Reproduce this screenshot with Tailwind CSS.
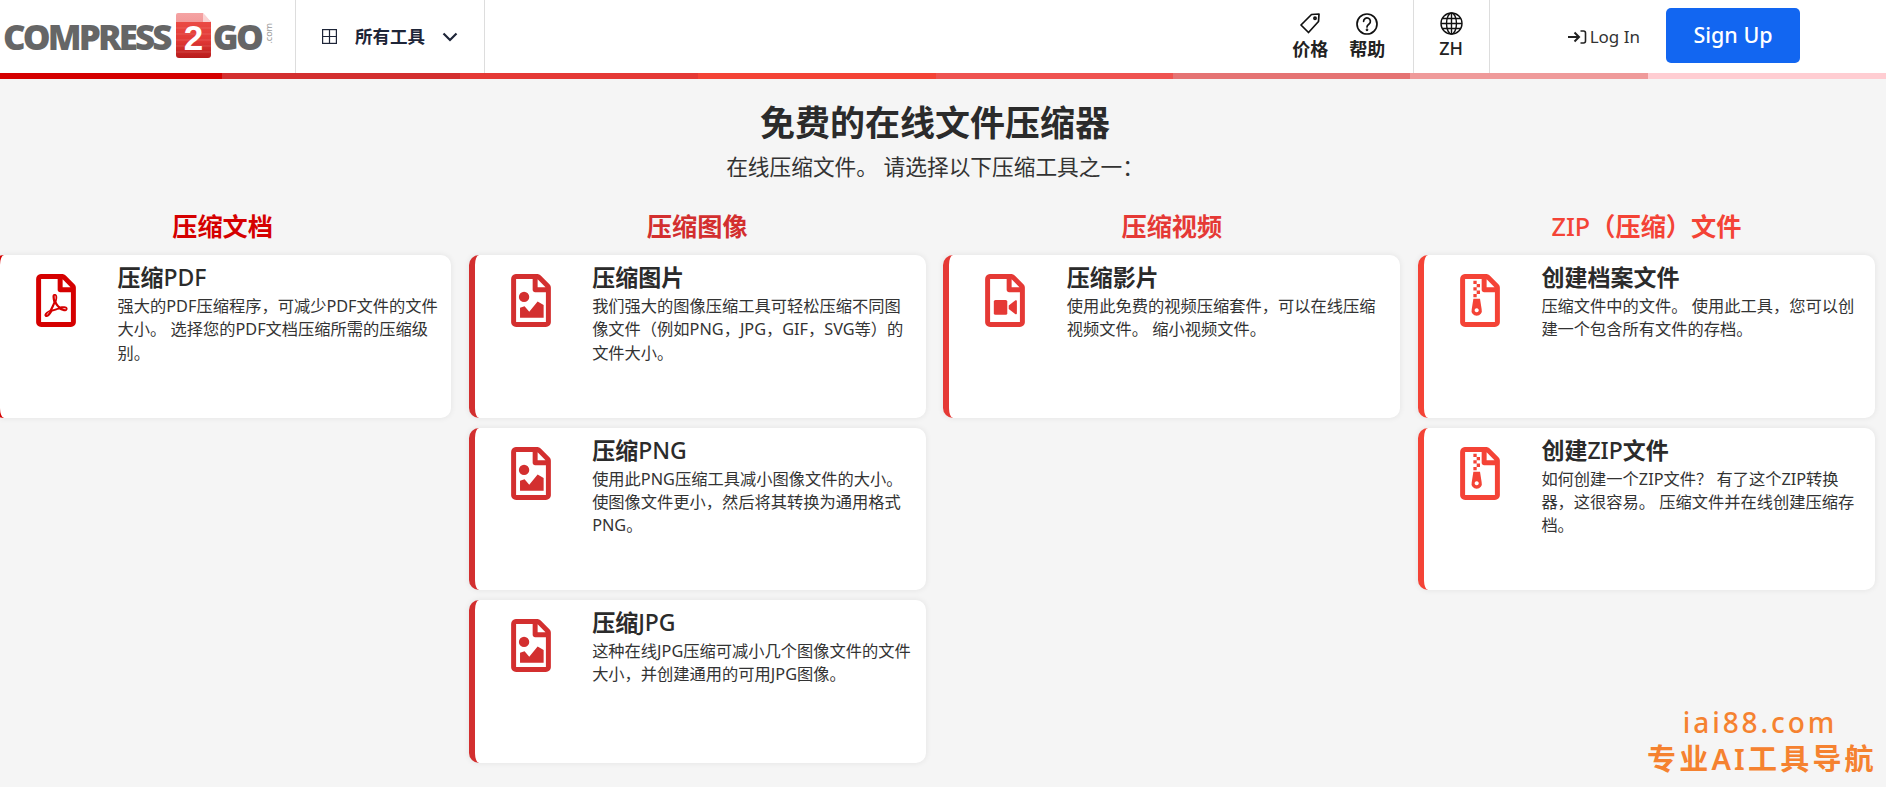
<!DOCTYPE html>
<html lang="zh">
<head>
    <meta charset="UTF-8" />
    <meta name="viewport" content="width=device-width, initial-scale=1.0">
    <title>Compress2Go</title>
    <script src="https://cdn.jsdelivr.net/npm/@tailwindcss/browser@4"></script>
</head>
<body class="relative h-[787px] overflow-hidden bg-[#f5f5f5] text-[#333] font-['Noto_Sans','Noto_Sans_CJK_SC',sans-serif]">

<!-- Header -->
<header class="flex h-[73px] bg-white">
    <a class="flex w-[296px] items-center border-r border-[#ddd] pb-[1px] pl-[3px] text-[#666]">
        <span class="font-['Open_Sans',sans-serif] text-[35px] font-extrabold leading-none tracking-[-2.9px]">COMPRESS</span>
        <svg class="ml-[6px] mt-[-1px] h-[45px] w-[35px] shrink-0" viewBox="0 0 35 45">
            <defs>
                <linearGradient id="doc" x1="0" y1="0" x2="0" y2="1">
                    <stop offset="0" stop-color="#f5a3a3"/>
                    <stop offset=".2" stop-color="#f29a9a"/>
                    <stop offset=".21" stop-color="#ea4a44"/>
                    <stop offset=".6" stop-color="#e23a36"/>
                    <stop offset="1" stop-color="#b81c1c"/>
                </linearGradient>
            </defs>
            <path d="M2 0h25l8 9v33a3 3 0 0 1-3 3H3a3 3 0 0 1-3-3V2a2 2 0 0 1 2-2z" fill="url(#doc)"/>
            <path d="M27 0l8 9h-8z" fill="#fff" opacity=".55"/>
            <path d="M0 15h35M0 21h35M0 27h35M0 33h35M0 39h35" stroke="#fff" stroke-opacity=".18" stroke-width=".8"/>
            <text x="17.5" y="37" text-anchor="middle" fill="#fff" font-family="Liberation Sans" font-weight="700" font-size="35">2</text>
        </svg>
        <span class="ml-[2px] font-['Open_Sans',sans-serif] text-[35px] font-extrabold leading-none tracking-[-2.6px]">GO</span>
        <span class="ml-[3px] mt-[-5px] rotate-180 text-[9px] leading-none text-[#999] [writing-mode:vertical-rl]">.com</span>
    </a>
    <button class="flex w-[189px] items-center border-r border-[#ddd] pl-[26px] text-[#1e2538]">
        <svg class="h-[15px] w-[15px]" viewBox="0 0 15 15" fill="none" stroke="currentColor" stroke-width="1.2"><rect x=".6" y=".6" width="13.8" height="13.8"/><path d="M7.5 .6v13.8M.6 7.5h13.8"/></svg>
        <span class="ml-[18px] text-[17.5px] font-semibold">所有工具</span>
        <svg class="ml-[17px] h-[10px] w-[16px]" viewBox="0 0 16 10" fill="none" stroke="currentColor" stroke-width="2.2"><path d="M1.5 1.5L8 8l6.5-6.5"/></svg>
    </button>

    <div class="ml-auto flex">
        <a class="flex w-[57px] flex-col items-center pt-[13px] text-[#222]">
            <svg class="h-[21px] w-[21px]" viewBox="0 0 21 21" fill="none" stroke="#111" stroke-width="1.7" stroke-linejoin="round"><path d="M11.5 1.5l7.5-.5-.5 7.5L8.5 19.5 1 12z"/><circle cx="15" cy="5.2" r="1.1"/></svg>
            <span class="mt-[3px] text-[18px] font-semibold leading-[24px]">价格</span>
        </a>
        <a class="flex w-[57px] flex-col items-center pt-[13px] text-[#222]">
            <svg class="h-[22px] w-[22px]" viewBox="0 0 22 22" fill="none" stroke="#111" stroke-width="1.7"><circle cx="11" cy="11" r="10"/><path d="M7.6 8.3a3.4 3.4 0 1 1 5.6 2.6c-1.2 1-2.2 1.6-2.2 3.1" stroke-linecap="round"/><circle cx="11" cy="16.8" r=".5"/></svg>
            <span class="mt-[2px] text-[18px] font-semibold leading-[24px]">帮助</span>
        </a>
        <div class="w-[18px] border-r border-[#ddd]"></div>
        <a class="flex w-[76px] flex-col items-center border-r border-[#ddd] pt-[12px] text-[#222]">
            <svg class="h-[23px] w-[23px]" viewBox="0 0 23 23" fill="none" stroke="#111" stroke-width="1.4"><circle cx="11.5" cy="11.5" r="10.5"/><ellipse cx="11.5" cy="11.5" rx="5" ry="10.5"/><path d="M11.5 1v21M1 11.5h21M2.4 6.5h18.2M2.4 16.5h18.2"/></svg>
            <span class="mt-[1px] text-[18px] font-medium leading-[24px]">ZH</span>
        </a>
        <a class="ml-[78px] flex items-center text-[#333]">
            <svg class="h-[16px] w-[19px]" viewBox="0 0 19 16" fill="none" stroke="#222" stroke-width="2"><path d="M0 8h10M6.5 3.5L11 8l-4.5 4.5"/><path d="M12.5 2h3a2 2 0 0 1 2 2v8a2 2 0 0 1-2 2h-3" stroke-width="1.6"/></svg>
            <span class="ml-[3px] text-[17px] leading-none">Log In</span>
        </a>
        <div class="ml-[26px] mr-[86px] mt-[8px]">
            <button class="h-[55px] w-[134px] rounded-[5px] bg-[#1266f1] text-[21.5px] font-medium text-white">Sign Up</button>
        </div>
    </div>
</header>

<!-- Colour strip -->
<div class="flex h-[6px]">
    <div class="w-[222px] bg-[#d50000]"></div>
    <div class="w-[238px] bg-[#d32f2f]"></div>
    <div class="w-[238px] bg-[#e53935]"></div>
    <div class="w-[238px] bg-[#f44336]"></div>
    <div class="w-[237px] bg-[#ef5350]"></div>
    <div class="w-[237px] bg-[#e57373]"></div>
    <div class="w-[238px] bg-[#ef9a9a]"></div>
    <div class="w-[238px] bg-[#ffcdd2]"></div>
</div>

<!-- Page title -->
<div class="w-[1870px] pt-[23px] text-center">
    <h1 class="text-[35px] font-bold leading-[42px] text-[#2b2b2b]">免费的在线文件压缩器</h1>
    <p class="mt-[8px] text-[21.7px] leading-[30px]">在线压缩文件。 请选择以下压缩工具之一：</p>
</div>

<!-- Tool columns -->
<div class="ml-[-6px] mt-[27px] grid w-[1881px] grid-cols-4 gap-x-[17.5px]">

    <div class="flex flex-col gap-[10px]">
        <h2 class="mb-[2px] text-center text-[25.2px] font-bold leading-[34px] text-[#d50000]">压缩文档</h2>
        <div class="flex h-[162.5px] rounded-[10px] border-l-[6px] border-[#d50000] bg-white pl-[36px] pt-[19px] shadow-[0_0_6px_rgba(0,0,0,0.08)]">
            <svg class="h-[53px] w-[40px] shrink-0" viewBox="0 0 384 512" fill="#d50000"><path d="M369.9 97.9L286 14C277 5 264.8-.1 252.1-.1H48C21.5 0 0 21.5 0 48v416c0 26.5 21.5 48 48 48h288c26.5 0 48-21.5 48-48V131.9c0-12.7-5.1-25-14.1-34zM332.1 128H256V51.9l76.1 76.1zM48 464V48h160v104c0 13.3 10.7 24 24 24h104v288H48zm250.2-143.7c-12.2-12-47-8.7-64.4-6.5-17.2-10.5-28.7-25-36.8-46.3 3.9-16.1 10.1-40.6 5.4-56-4.2-26.2-37.8-23.6-42.6-5.9-4.4 16.1-.4 38.5 7 67.1-10 23.9-24.9 56-35.4 74.4-20 10.3-47 26.2-51 46.2-3.3 15.8 26 55.2 76.1-31.2 22.4-7.4 46.8-16.5 68.4-20.1 18.9 10.2 41 17 55.8 17 25.5 0 28-28.2 17.5-38.7zm-198.1 77.8c5.1-13.7 24.5-29.5 30.4-35-19 30.3-30.4 35.7-30.4 35zm81.6-190.6c7.4 0 6.7 32.1 1.8 40.8-4.4-13.9-4.3-40.8-1.8-40.8zm-24.4 136.6c9.7-16.9 18-37 24.7-54.7 8.3 15.1 18.9 27.2 30.1 35.5-20.8 4.3-38.9 13.1-54.8 19.2zm131.6-5s-5 6-37.3-7.8c35.1-2.6 40.9 5.4 37.3 7.8z"/></svg>
            <div class="ml-[41.5px] w-[322px]">
                <h3 class="mt-[-12px] text-[23px] font-bold leading-[30px] text-[#2b2b2b]">压缩<span class="font-medium">PDF</span></h3>
                <p class="mt-[3px] text-[16.25px] leading-[23.4px]">强大的PDF压缩程序，可减少PDF文件的文件大小。 选择您的PDF文档压缩所需的压缩级别。</p>
            </div>
        </div>
    </div>

    <div class="flex flex-col gap-[10px]">
        <h2 class="mb-[2px] text-center text-[25.2px] font-bold leading-[34px] text-[#d32f2f]">压缩图像</h2>
        <div class="flex h-[162.5px] rounded-[10px] border-l-[6px] border-[#d32f2f] bg-white pl-[36px] pt-[19px] shadow-[0_0_6px_rgba(0,0,0,0.08)]">
            <svg class="h-[53px] w-[40px] shrink-0" viewBox="0 0 384 512" fill="#d32f2f"><path d="M369.9 97.9L286 14C277 5 264.8-.1 252.1-.1H48C21.5 0 0 21.5 0 48v416c0 26.5 21.5 48 48 48h288c26.5 0 48-21.5 48-48V131.9c0-12.7-5.1-25-14.1-34zM332.1 128H256V51.9l76.1 76.1zM48 464V48h160v104c0 13.3 10.7 24 24 24h104v288H48z"/><circle cx="125" cy="221" r="50"/><path d="M86 422V326l44-14 45 53 81-100 58 35v122z"/></svg>
            <div class="ml-[41.5px] w-[322px]">
                <h3 class="mt-[-12px] text-[23px] font-bold leading-[30px] text-[#2b2b2b]">压缩图片</h3>
                <p class="mt-[3px] text-[16.25px] leading-[23.4px]">我们强大的图像压缩工具可轻松压缩不同图像文件（例如PNG，JPG，GIF，SVG等）的文件大小。</p>
            </div>
        </div>
        <div class="flex h-[162.5px] rounded-[10px] border-l-[6px] border-[#d32f2f] bg-white pl-[36px] pt-[19px] shadow-[0_0_6px_rgba(0,0,0,0.08)]">
            <svg class="h-[53px] w-[40px] shrink-0" viewBox="0 0 384 512" fill="#d32f2f"><path d="M369.9 97.9L286 14C277 5 264.8-.1 252.1-.1H48C21.5 0 0 21.5 0 48v416c0 26.5 21.5 48 48 48h288c26.5 0 48-21.5 48-48V131.9c0-12.7-5.1-25-14.1-34zM332.1 128H256V51.9l76.1 76.1zM48 464V48h160v104c0 13.3 10.7 24 24 24h104v288H48z"/><circle cx="125" cy="221" r="50"/><path d="M86 422V326l44-14 45 53 81-100 58 35v122z"/></svg>
            <div class="ml-[41.5px] w-[322px]">
                <h3 class="mt-[-12px] text-[23px] font-bold leading-[30px] text-[#2b2b2b]">压缩<span class="font-medium">PNG</span></h3>
                <p class="mt-[3px] text-[16.25px] leading-[23.4px]">使用此PNG压缩工具减小图像文件的大小。 使图像文件更小，然后将其转换为通用格式PNG。</p>
            </div>
        </div>
        <div class="flex h-[162.5px] rounded-[10px] border-l-[6px] border-[#d32f2f] bg-white pl-[36px] pt-[19px] shadow-[0_0_6px_rgba(0,0,0,0.08)]">
            <svg class="h-[53px] w-[40px] shrink-0" viewBox="0 0 384 512" fill="#d32f2f"><path d="M369.9 97.9L286 14C277 5 264.8-.1 252.1-.1H48C21.5 0 0 21.5 0 48v416c0 26.5 21.5 48 48 48h288c26.5 0 48-21.5 48-48V131.9c0-12.7-5.1-25-14.1-34zM332.1 128H256V51.9l76.1 76.1zM48 464V48h160v104c0 13.3 10.7 24 24 24h104v288H48z"/><circle cx="125" cy="221" r="50"/><path d="M86 422V326l44-14 45 53 81-100 58 35v122z"/></svg>
            <div class="ml-[41.5px] w-[322px]">
                <h3 class="mt-[-12px] text-[23px] font-bold leading-[30px] text-[#2b2b2b]">压缩<span class="font-medium">JPG</span></h3>
                <p class="mt-[3px] text-[16.25px] leading-[23.4px]">这种在线JPG压缩可减小几个图像文件的文件大小，并创建通用的可用JPG图像。</p>
            </div>
        </div>
    </div>

    <div class="flex flex-col gap-[10px]">
        <h2 class="mb-[2px] text-center text-[25.2px] font-bold leading-[34px] text-[#e53935]">压缩视频</h2>
        <div class="flex h-[162.5px] rounded-[10px] border-l-[6px] border-[#e53935] bg-white pl-[36px] pt-[19px] shadow-[0_0_6px_rgba(0,0,0,0.08)]">
            <svg class="h-[53px] w-[40px] shrink-0" viewBox="0 0 384 512" fill="#e53935"><path d="M369.9 97.9L286 14C277 5 264.8-.1 252.1-.1H48C21.5 0 0 21.5 0 48v416c0 26.5 21.5 48 48 48h288c26.5 0 48-21.5 48-48V131.9c0-12.7-5.1-25-14.1-34zM332.1 128H256V51.9l76.1 76.1zM48 464V48h160v104c0 13.3 10.7 24 24 24h104v288H48z"/><rect x="84" y="250" width="130" height="144" rx="16"/><path d="M228 305l62-48c8-6 17-2 17 8v114c0 10-9 14-17 8l-62-48z"/></svg>
            <div class="ml-[41.5px] w-[322px]">
                <h3 class="mt-[-12px] text-[23px] font-bold leading-[30px] text-[#2b2b2b]">压缩影片</h3>
                <p class="mt-[3px] text-[16.25px] leading-[23.4px]">使用此免费的视频压缩套件，可以在线压缩视频文件。 缩小视频文件。</p>
            </div>
        </div>
    </div>

    <div class="flex flex-col gap-[10px]">
        <h2 class="mb-[2px] text-center text-[25.2px] font-bold leading-[34px] text-[#f44336]"><span class="font-medium">ZIP</span>（压缩）文件</h2>
        <div class="flex h-[162.5px] rounded-[10px] border-l-[6px] border-[#f44336] bg-white pl-[36px] pt-[19px] shadow-[0_0_6px_rgba(0,0,0,0.08)]">
            <svg class="h-[53px] w-[40px] shrink-0" viewBox="0 0 384 512" fill="#f44336"><path d="M369.9 97.9L286 14C277 5 264.8-.1 252.1-.1H48C21.5 0 0 21.5 0 48v416c0 26.5 21.5 48 48 48h288c26.5 0 48-21.5 48-48V131.9c0-12.7-5.1-25-14.1-34zM332.1 128H256V51.9l76.1 76.1zM48 464V48h160v104c0 13.3 10.7 24 24 24h104v288H48z"/><path d="M128 64h32v32h-32zM160 96h32v32h-32zM128 128h32v32h-32zM160 160h32v32h-32zM128 192h32v32h-32z"/><path fill-rule="evenodd" d="M128 240h64l16 100a50 50 0 1 1-96 0zM160 330a20 20 0 1 0 .1 0z"/></svg>
            <div class="ml-[41.5px] w-[322px]">
                <h3 class="mt-[-12px] text-[23px] font-bold leading-[30px] text-[#2b2b2b]">创建档案文件</h3>
                <p class="mt-[3px] text-[16.25px] leading-[23.4px]">压缩文件中的文件。 使用此工具，您可以创建一个包含所有文件的存档。</p>
            </div>
        </div>
        <div class="flex h-[162.5px] rounded-[10px] border-l-[6px] border-[#f44336] bg-white pl-[36px] pt-[19px] shadow-[0_0_6px_rgba(0,0,0,0.08)]">
            <svg class="h-[53px] w-[40px] shrink-0" viewBox="0 0 384 512" fill="#f44336"><path d="M369.9 97.9L286 14C277 5 264.8-.1 252.1-.1H48C21.5 0 0 21.5 0 48v416c0 26.5 21.5 48 48 48h288c26.5 0 48-21.5 48-48V131.9c0-12.7-5.1-25-14.1-34zM332.1 128H256V51.9l76.1 76.1zM48 464V48h160v104c0 13.3 10.7 24 24 24h104v288H48z"/><path d="M128 64h32v32h-32zM160 96h32v32h-32zM128 128h32v32h-32zM160 160h32v32h-32zM128 192h32v32h-32z"/><path fill-rule="evenodd" d="M128 240h64l16 100a50 50 0 1 1-96 0zM160 330a20 20 0 1 0 .1 0z"/></svg>
            <div class="ml-[41.5px] w-[322px]">
                <h3 class="mt-[-12px] text-[23px] font-bold leading-[30px] text-[#2b2b2b]">创建<span class="font-medium">ZIP</span>文件</h3>
                <p class="mt-[3px] text-[16.25px] leading-[23.4px]">如何创建一个ZIP文件？ 有了这个ZIP转换器，这很容易。 压缩文件并在线创建压缩存档。</p>
            </div>
        </div>
    </div>
</div>

<!-- Watermark -->
<div class="absolute bottom-[8px] right-[13px] w-[226px] text-center font-semibold text-[#f58230]">
    <div class="text-[28px] font-medium leading-[34px] tracking-[2.9px]">iai88.com</div>
    <div class="whitespace-nowrap text-[29px] leading-[40px] tracking-[3.2px]">专业AI工具导航</div>
</div>

</body>
</html>
